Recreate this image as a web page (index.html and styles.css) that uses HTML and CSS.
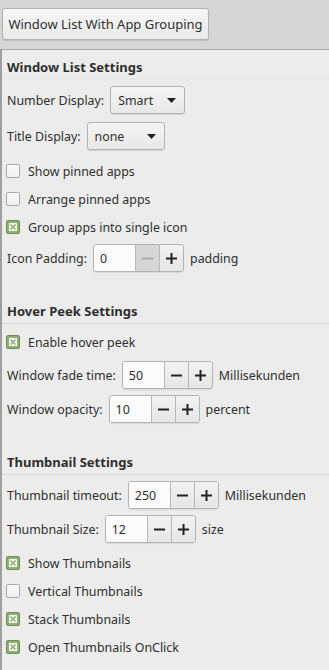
FILE: index.html
```html
<!DOCTYPE html>
<html>
<head>
<meta charset="utf-8">
<link rel="stylesheet" href="styles.css">
</head>
<body>
<div class="top">
  <button class="btn">Window List With App Grouping</button>
</div>
<div class="panel">
  <div class="heading h1">Window List Settings</div>
  <div class="row ctl m5">
    <span class="lbl">Number Display:</span>
    <div class="combo w75"><span>Smart</span><svg class="arrow" width="9" height="5" viewBox="0 0 9 5"><path d="M0 0H9L4.5 5Z" fill="#222"/></svg></div>
  </div>
  <div class="row ctl m6">
    <span class="lbl">Title Display:</span>
    <div class="combo w78"><span>none</span><svg class="arrow" width="9" height="5" viewBox="0 0 9 5"><path d="M0 0H9L4.5 5Z" fill="#222"/></svg></div>
  </div>
  <div class="row chk m6"><span class="box"></span><span>Show pinned apps</span></div>
  <div class="row chk"><span class="box"></span><span>Arrange pinned apps</span></div>
  <div class="row chk"><span class="box on"><svg width="14" height="14" viewBox="0 0 14 14"><rect x="3" y="3" width="8" height="8" fill="#f6f8f2"/><path d="M4.5 4.5L9.5 9.5M9.5 4.5L4.5 9.5" stroke="#8aa870" stroke-width="1.4"/></svg></span><span>Group apps into single icon</span></div>
  <div class="row ctl m2">
    <span class="lbl">Icon Padding:</span>
    <div class="spin"><span class="entry">0</span><span class="sb dis"><svg width="11" height="11" viewBox="0 0 11 11"><rect x="0" y="4.5" width="11" height="2" fill="#a8a8a8"/></svg></span><span class="sb"><svg width="11" height="11" viewBox="0 0 11 11"><rect x="0" y="4.5" width="11" height="2" fill="#222"/><rect x="4.5" y="0" width="2" height="11" fill="#222"/></svg></span></div>
    <span class="unit">padding</span>
  </div>

  <div class="heading h2">Hover Peek Settings</div>
  <div class="row chk m4"><span class="box on"><svg width="14" height="14" viewBox="0 0 14 14"><rect x="3" y="3" width="8" height="8" fill="#f6f8f2"/><path d="M4.5 4.5L9.5 9.5M9.5 4.5L4.5 9.5" stroke="#8aa870" stroke-width="1.4"/></svg></span><span>Enable hover peek</span></div>
  <div class="row ctl m4">
    <span class="lbl">Window fade time:</span>
    <div class="spin"><span class="entry">50</span><span class="sb"><svg width="11" height="11" viewBox="0 0 11 11"><rect x="0" y="4.5" width="11" height="2" fill="#222"/></svg></span><span class="sb"><svg width="11" height="11" viewBox="0 0 11 11"><rect x="0" y="4.5" width="11" height="2" fill="#222"/><rect x="4.5" y="0" width="2" height="11" fill="#222"/></svg></span></div>
    <span class="unit">Millisekunden</span>
  </div>
  <div class="row ctl m4">
    <span class="lbl">Window opacity:</span>
    <div class="spin"><span class="entry">10</span><span class="sb"><svg width="11" height="11" viewBox="0 0 11 11"><rect x="0" y="4.5" width="11" height="2" fill="#222"/></svg></span><span class="sb"><svg width="11" height="11" viewBox="0 0 11 11"><rect x="0" y="4.5" width="11" height="2" fill="#222"/><rect x="4.5" y="0" width="2" height="11" fill="#222"/></svg></span></div>
    <span class="unit">percent</span>
  </div>

  <div class="heading h2">Thumbnail Settings</div>
  <div class="row ctl m5">
    <span class="lbl">Thumbnail timeout:</span>
    <div class="spin"><span class="entry">250</span><span class="sb"><svg width="11" height="11" viewBox="0 0 11 11"><rect x="0" y="4.5" width="11" height="2" fill="#222"/></svg></span><span class="sb"><svg width="11" height="11" viewBox="0 0 11 11"><rect x="0" y="4.5" width="11" height="2" fill="#222"/><rect x="4.5" y="0" width="2" height="11" fill="#222"/></svg></span></div>
    <span class="unit">Millisekunden</span>
  </div>
  <div class="row ctl m4">
    <span class="lbl">Thumbnail Size:</span>
    <div class="spin"><span class="entry">12</span><span class="sb"><svg width="11" height="11" viewBox="0 0 11 11"><rect x="0" y="4.5" width="11" height="2" fill="#222"/></svg></span><span class="sb"><svg width="11" height="11" viewBox="0 0 11 11"><rect x="0" y="4.5" width="11" height="2" fill="#222"/><rect x="4.5" y="0" width="2" height="11" fill="#222"/></svg></span></div>
    <span class="unit">size</span>
  </div>
  <div class="row chk m5"><span class="box on"><svg width="14" height="14" viewBox="0 0 14 14"><rect x="3" y="3" width="8" height="8" fill="#f6f8f2"/><path d="M4.5 4.5L9.5 9.5M9.5 4.5L4.5 9.5" stroke="#8aa870" stroke-width="1.4"/></svg></span><span>Show Thumbnails</span></div>
  <div class="row chk"><span class="box"></span><span>Vertical Thumbnails</span></div>
  <div class="row chk"><span class="box on"><svg width="14" height="14" viewBox="0 0 14 14"><rect x="3" y="3" width="8" height="8" fill="#f6f8f2"/><path d="M4.5 4.5L9.5 9.5M9.5 4.5L4.5 9.5" stroke="#8aa870" stroke-width="1.4"/></svg></span><span>Stack Thumbnails</span></div>
  <div class="row chk"><span class="box on"><svg width="14" height="14" viewBox="0 0 14 14"><rect x="3" y="3" width="8" height="8" fill="#f6f8f2"/><path d="M4.5 4.5L9.5 9.5M9.5 4.5L4.5 9.5" stroke="#8aa870" stroke-width="1.4"/></svg></span><span>Open Thumbnails OnClick</span></div>
</div>
</body>
</html>
```
FILE: styles.css
```css
html, body {
  margin: 0;
  padding: 0;
  height: 100%;
}
body {
  background: #d6d6d6;
  font-family: "Noto Sans", "Open Sans", sans-serif;
  font-size: 12.4px;
  color: #2f2f2f;
  display: flex;
  flex-direction: column;
  overflow: hidden;
}
.top {
  height: 49px;
  box-sizing: border-box;
  padding: 8px 0 0 2px;
  flex: none;
}
.btn {
  height: 32px;
  width: 207px;
  font-family: inherit;
  font-size: 13px;
  color: #2f2f2f;
  border: 1px solid #b3b3b3;
  border-radius: 3px;
  background: linear-gradient(#f6f6f6, #eaeaea);
  box-shadow: 0 1px 1px rgba(0,0,0,0.12);
  padding: 0;
}
.panel {
  flex: 1;
  background: #ececec;
  border-top: 1px solid #a8a8a8;
  border-left: 2px solid #a0a0a0;
  padding-left: 4px;
  display: flex;
  flex-direction: column;
}
.heading {
  font-weight: bold;
  font-size: 13px;
  height: 24px;
  line-height: 24px;
  border-bottom: 1px solid #d6d6d6;
  margin-left: -4px;
  padding-left: 5px;
}
.h1 { margin-top: 5px; border-bottom-color: #e6e6e6; }
.h2 { margin-top: 26px; }
.row {
  display: flex;
  align-items: center;
  flex: none;
  padding-left: 1px;
}
.row.chk { padding-left: 0; }
.ctl { height: 30px; }
.chk { height: 28px; }
.m2 { margin-top: 2px; }
.m4 { margin-top: 4px; }
.m5 { margin-top: 5px; }
.m6 { margin-top: 6px; }
.lbl { margin-right: 6px; }
.unit { margin-left: 6px; }
.combo {
  height: 28px;
  box-sizing: border-box;
  border: 1px solid #b3b3b3;
  border-radius: 3px;
  background: linear-gradient(#f4f4f4, #e8e8e8);
  box-shadow: 0 1px 1px rgba(0,0,0,0.1);
  display: flex;
  align-items: center;
  justify-content: space-between;
  padding: 0 8px 0 7px;
}
.w75 { width: 75px; }
.w78 { width: 78px; }
.box {
  width: 14px;
  height: 14px;
  box-sizing: border-box;
  border: 1px solid #a9a9a9;
  border-radius: 2px;
  background: linear-gradient(#fafafa, #f0f0f0);
  margin: 0 8px 0 0;
  display: inline-flex;
}
.box.on {
  background: #8fae74;
  border-color: #6f8f58;
}
.box.on svg { margin: -1px; }
.spin {
  display: flex;
  height: 28px;
  box-sizing: border-box;
  border: 1px solid #b3b3b3;
  border-radius: 3px;
  overflow: hidden;
  box-shadow: 0 1px 1px rgba(0,0,0,0.08);
}
.entry {
  width: 41px;
  background: #fbfbfb;
  padding-left: 6px;
  box-sizing: border-box;
  display: flex;
  align-items: center;
}
.sb {
  width: 23px;
  border-left: 1px solid #b8b8b8;
  background: linear-gradient(#f2f2f2, #e6e6e6);
  display: flex;
  align-items: center;
  justify-content: center;
}
.sb.dis { background: #d6d6d6; }
```
